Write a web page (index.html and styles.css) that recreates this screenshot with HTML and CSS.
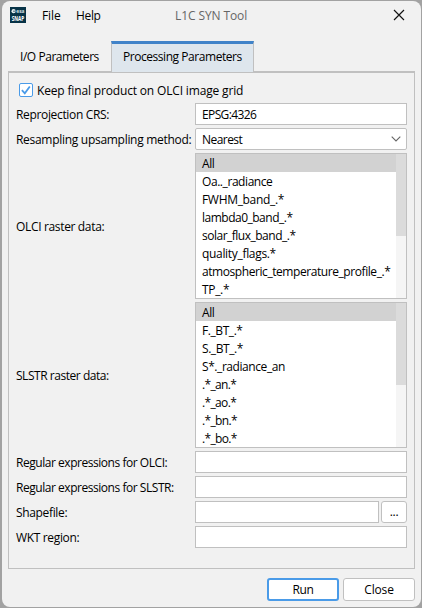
FILE: index.html
```html
<!DOCTYPE html>
<html lang="en">
<head>
<meta charset="utf-8">
<title>L1C SYN Tool</title>
<link rel="stylesheet" href="styles.css">
</head>
<body>
<main class="window">
  <header class="titlebar">
    <svg class="logo" width="16" height="16" viewBox="0 0 16 16">
      <rect width="16" height="16" fill="#073347"/>
      <circle cx="3.6" cy="4.2" r="2.1" fill="#e6eef0"/>
      <path d="M3 4.2h2.8" stroke="#073347" stroke-width=".7"/>
      <text x="6.3" y="5.9" class="logo-esa" textLength="8.2" lengthAdjust="spacingAndGlyphs">esa</text>
      <text x="1.7" y="14.4" class="logo-snap" textLength="12.6" lengthAdjust="spacingAndGlyphs">SNAP</text>
    </svg>
    <span class="menu file">File</span>
    <span class="menu help">Help</span>
    <span class="title">L1C SYN Tool</span>
    <svg class="close" width="12" height="12" viewBox="0 0 12 12"><path d="M1 1l10 10M11 1L1 11" stroke="#111" stroke-width="1.15"/></svg>
  </header>
  <nav class="tabs">
    <span class="tab tab-io">I/O Parameters</span>
    <span class="tab tab-active">Processing Parameters</span>
  </nav>
  <section class="panel">
    <div class="check"><svg width="14" height="14" viewBox="0 0 14 14"><rect x=".5" y=".5" width="13" height="13" rx="1.5" fill="#fff" stroke="#4a9be8"/><path d="M2.9 7.1l2.9 3.2 5-6.8" fill="none" stroke="#4a9be8" stroke-width="1.8"/></svg><span class="t-keep">Keep final product on OLCI image grid</span></div>
    <div class="form">
      <label>Reprojection CRS:</label><div class="field"><span class="t-epsg">EPSG:4326</span></div>
      <label class="t-method">Resampling upsampling method:</label>
      <div class="field combo"><span class="t-nearest">Nearest</span><svg width="10" height="6" viewBox="0 0 10 6"><path d="M.7.7L5 5 9.3.7" fill="none" stroke="#666" stroke-width="1.1"/></svg></div>
      <label>OLCI raster data:</label>
      <div class="list"><ul><li class="selected">All</li><li>Oa.._radiance</li><li class="t-fwhm">FWHM_band_.*</li><li class="t-lambda">lambda0_band_.*</li><li class="t-solar">solar_flux_band_.*</li><li class="t-quality">quality_flags.*</li><li>atmospheric_temperature_profile_.*</li><li class="t-fwhm">TP_.*</li></ul><div class="scroll"><div class="thumb"></div></div></div>
      <label class="t-slstr">SLSTR raster data:</label>
      <div class="list"><ul><li class="selected">All</li><li>F._BT_.*</li><li>S._BT_.*</li><li>S*._radiance_an</li><li class="t-short">.*_an.*</li><li class="t-short">.*_ao.*</li><li class="t-short">.*_bn.*</li><li class="t-short">.*_bo.*</li></ul><div class="scroll"><div class="thumb"></div></div></div>
      <label class="t-regex">Regular expressions for OLCI:</label><div class="field"></div>
      <label class="t-regex">Regular expressions for SLSTR:</label><div class="field"></div>
      <label>Shapefile:</label><div class="file-row"><div class="field"></div><button class="browse">...</button></div>
      <label>WKT region:</label><div class="field"></div>
    </div>
  </section>
  <footer class="actions"><button class="run">Run</button><button class="dismiss">Close</button></footer>
</main>
</body>
</html>
```
FILE: styles.css
```css
* { box-sizing: border-box; }
body { margin: 0; height: 608px; background: #a2a2a2; font: 12px/16px "Open Sans", "Noto Sans", sans-serif; letter-spacing: -0.34px; color: #000; padding: 1px 1px 1px 2px; white-space: nowrap; overflow: hidden; }
.window { width: 419px; height: 606px; background: #f1f1f1; border-radius: 8px; overflow: hidden; }
.titlebar { height: 40px; display: flex; align-items: flex-start; padding: 6px 16px 0 8px; }
.logo { margin-right: 16px; overflow: visible; }
.logo-esa { font: bold 5.5px "Open Sans", sans-serif; fill: #d8e3e6; letter-spacing: 0; }
.logo-snap { font: bold 6.5px "Open Sans", sans-serif; fill: #fff; letter-spacing: 0; }
.menu { margin-top: 1px; }
.file { width: 34px; letter-spacing: -0.1px; }
.help { width: 99px; }
.title { margin-top: 1px; color: #666; letter-spacing: -0.1px; }
.close { margin: 2px 0 0 auto; }
.tabs { height: 30px; display: flex; padding-left: 6px; }
.tab { padding-top: 8px; letter-spacing: -0.45px; }
.tab-io { width: 103px; padding-left: 12px; }
.tab-active { width: 143px; height: 31px; padding: 5px 0 0 11px; background: #dee6ed; border: 1px solid #c0c0c0; border-top: 3px solid #4083c9; border-bottom: 0; position: relative; }
.panel { width: 407px; height: 498px; margin-left: 6px; border: 1px solid #c0c0c0; border-top-width: 2px; padding: 10px 7px 0; }
.check { height: 20px; display: flex; gap: 4px; padding-left: 3px; }
.t-keep { letter-spacing: -0.16px; }
.form { display: grid; grid-template-columns: 179px 212px; grid-template-rows: 22px 22px 146px 146px 22px 22px 22px 22px; gap: 3px 0; }
label { display: flex; align-items: center; padding-top: 2px; }
.t-method { letter-spacing: -0.29px; }
.t-epsg { letter-spacing: -0.62px; }
.t-nearest { letter-spacing: -0.55px; padding-top: 2px; }
.t-slstr { letter-spacing: -0.46px; }
.t-regex { letter-spacing: -0.46px; }
.field { height: 22px; border: 1px solid #c0c0c0; background: #fff; padding: 3px 6px; }
.combo { display: flex; align-items: center; justify-content: space-between; padding: 0 5px 0 6px; border-radius: 2px; }
.list { height: 146px; border: 1px solid #c0c0c0; background: #fff; display: flex; }
ul { list-style: none; margin: 0; padding: 0; flex: 1; letter-spacing: -0.43px; }
li { height: 18px; padding: 2px 0 0 6px; }
.t-fwhm, .t-quality { letter-spacing: -0.32px; }
.t-lambda, .t-solar { letter-spacing: -0.5px; }
.t-short { letter-spacing: -0.65px; }
.selected { background: #d2d2d2; }
.scroll { width: 10px; background: #f5f5f5; }
.thumb { height: 82px; background: #dbdbdb; }
.file-row { display: flex; gap: 2px; }
.file-row .field { flex: 1; }
button { font: inherit; letter-spacing: inherit; color: #000; background: #fff; border: 1px solid #c0c0c0; border-radius: 3px; padding: 0; width: 72px; height: 23px; }
.browse { width: 26px; height: 22px; }
.run { border: 2px solid #4a9be8; }
.dismiss { letter-spacing: -0.15px; }
.actions { display: flex; justify-content: flex-end; gap: 4px; padding: 9px 6px 0 0; }
```
